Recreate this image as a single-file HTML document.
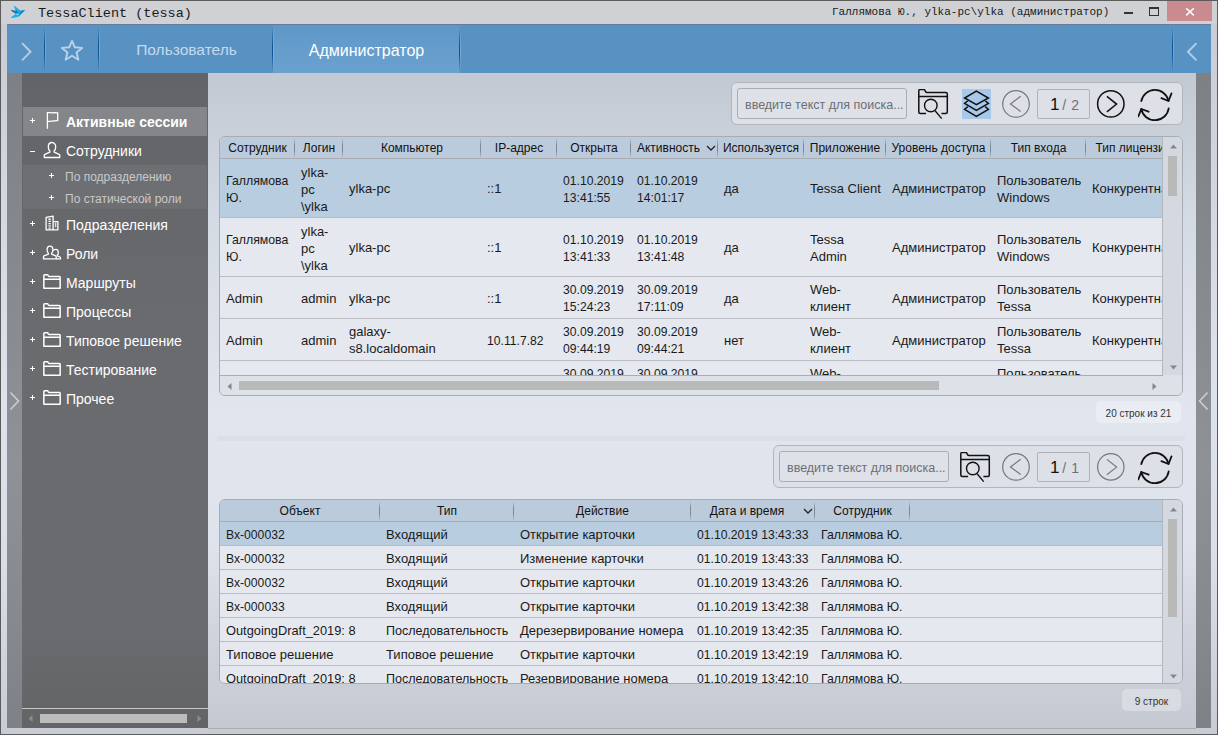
<!DOCTYPE html><html><head><meta charset="utf-8"><style>
*{margin:0;padding:0;box-sizing:border-box}
html,body{width:1218px;height:735px;overflow:hidden;background:#5b5b5b;font-family:"Liberation Sans",sans-serif}
.abs{position:absolute}
#win{position:absolute;left:1px;top:1px;width:1216px;height:733px;background:linear-gradient(#c7cbd3 0px,#d3d8e0 200px,#dde3ec 400px,#d9dee7 560px,#c8cdd5 733px)}
#title{position:absolute;left:1px;top:1px;width:1216px;height:23px;background:#cfd1d5}
.mono{font-family:"Liberation Mono",monospace}
#hdr{position:absolute;left:7px;top:24px;width:1204px;height:50px;background:#5892c3;border-top:1px solid #687b9a;border-bottom:1px solid #647b97}
.sep{position:absolute;top:2px;width:1px;height:45px;background:linear-gradient(rgba(13,80,150,0),#0b5599 40%,#0b5599 60%,rgba(13,80,150,0))}
.sep::after{content:'';position:absolute;left:1px;top:0;width:1px;height:45px;background:linear-gradient(rgba(140,190,230,0),rgba(140,190,230,0.6) 50%,rgba(140,190,230,0))}
.tab{position:absolute;top:0;height:49px;color:#fff;font-size:16px;line-height:49px;text-align:center}
#side{position:absolute;left:22px;top:73px;width:186px;height:655px;background:linear-gradient(#636467,#6a6b6e 40%,#6a6b6e 85%,#636466)}
#lstrip{position:absolute;left:7px;top:73px;width:15px;height:655px;background:linear-gradient(#7d8084,#8a8d91 45%,#8e9195 60%,#85888c 85%,#7e8185)}
#rstrip{position:absolute;left:1196px;top:73px;width:15px;height:655px;background:linear-gradient(#7d8084,#8a8d91 45%,#8e9195 60%,#85888c 85%,#7e8185)}
#main{position:absolute;left:208px;top:73px;width:988px;height:655px;background:linear-gradient(#c3c9d3 0px,#d5dbe4 150px,#e1e5ed 340px,#dfe4ec 470px,#d0d5dd 560px,#c4c9d2 655px)}
.srow{position:absolute;left:22px;width:185px;height:29px;color:#fff;font-size:14px}
.srow .pl{position:absolute;left:9px;top:0;line-height:29px;font-size:12px}
.srow .tx{position:absolute;left:44px;top:0;line-height:29px}
.ico{position:absolute}
.tb{position:absolute;background:#dde0e6;border:1px solid #b1b5bc;border-radius:6px}
.inp{position:absolute;background:#dee1e7;border:1px solid #a9adb4;border-radius:3px;color:#6c6f75;font-size:12.5px}
.pg{position:absolute;border:1px solid #aeb2b9;border-radius:2px;background:#dde0e6}
.grid{position:absolute;border:1px solid #a9adb3;border-radius:6px;overflow:hidden;background:#dde2e9}
.gh{position:absolute;left:0;top:0;height:22px;background:#bccbdb;border-bottom:1px solid #a7acb3}
.hc{position:absolute;top:0;height:22px;line-height:22px;font-size:12px;color:#111;text-align:center;white-space:nowrap}
.hs{position:absolute;top:1px;width:1px;height:20px;background:linear-gradient(#bccbdb,#7d8994 35%,#7d8994 65%,#bccbdb)}
.r{position:absolute;left:0;border-bottom:1px solid #b9bdc3;background:#e5e8ee}
.r.sel{background:#b9cde0}
.c{position:absolute;font-size:13px;color:#1a1a1a;line-height:17px;white-space:nowrap}
.badge{position:absolute;background:rgba(255,255,255,0.3);border-radius:5px;font-size:10px;color:#333;text-align:center}
</style></head><body>
<div id="win"></div>
<div id="title"></div>
<svg class="abs" style="left:8px;top:3px" width="22" height="18" viewBox="0 0 22 18">
<path d="M6.3 3.2 L12.5 8 L11.5 12.7 L8.8 9.5 Z" fill="#17ade6" stroke="#17ade6" stroke-width="0.8" stroke-linejoin="round"/>
<path d="M3.2 7.3 L9 8.5 L9.8 10.6 L7.5 10.3 Z" fill="#166db0" stroke="#166db0" stroke-width="0.8" stroke-linejoin="round"/>
<path d="M12.3 8.1 L14.7 7.1 L17.2 7 L16.3 7.9 L11.5 12.7 Z" fill="#1784c6"/>
<path d="M14.7 7.1 L17.2 6.8 L16.5 7.8 Z" fill="#2ab8ea"/>
<path d="M3.3 14.5 L9 10.5 L11.5 12.7 L8 14 Z" fill="#1aaee6" stroke="#1aaee6" stroke-width="0.8" stroke-linejoin="round"/>
<circle cx="9.3" cy="11.2" r="0.8" fill="#e8f6fc"/>
</svg>
<div class="abs mono" style="left:38px;top:4px;font-size:13.5px;line-height:19px;color:#1a1a1a">TessaClient (tessa)</div>
<div class="abs mono" style="left:832px;top:5px;font-size:11px;line-height:14px;color:#1a1a1a">Галлямова Ю., ylka-pc\ylka (администратор)</div>
<div class="abs" style="left:1124px;top:12px;width:9px;height:2px;background:#333"></div>
<div class="abs" style="left:1149px;top:7px;width:10px;height:9px;border:1px solid #333;border-top:2px solid #333"></div>
<div class="abs" style="left:1167px;top:1px;width:45px;height:20px;background:#c98b8e"></div>
<svg class="abs" style="left:1185px;top:7px" width="10" height="10" viewBox="0 0 10 10"><path d="M1.2 1.2 L8.8 8.4 M8.8 1.2 L1.2 8.4" stroke="#fff" stroke-width="1.5"/></svg>
<div id="hdr">
<div class="sep" style="left:37px"></div>
<div class="sep" style="left:91px"></div>
<div class="tab" style="left:266px;width:187px;background:linear-gradient(#5f98c8,#6aa1cf)"></div>
<div class="sep" style="left:265px"></div>
<div class="sep" style="left:452px"></div>
<div class="sep" style="left:1165px"></div>
<div class="tab" style="left:92px;width:175px;color:#c5d9ec;font-size:15.5px;line-height:50px">Пользователь</div>
<div class="tab" style="left:266px;width:187px;line-height:51px">Администратор</div>
<svg class="abs" style="left:14px;top:17px" width="12" height="20" viewBox="0 0 12 20"><path d="M1 1.2 L9.5 9.8 L1 18.4" fill="none" stroke="#b5cfe8" stroke-width="1.9"/></svg>
<svg class="abs" style="left:1179px;top:17px" width="12" height="20" viewBox="0 0 12 20"><path d="M10.5 1.2 L2 9.8 L10.5 18.4" fill="none" stroke="#b5cfe8" stroke-width="1.9"/></svg>
<svg class="abs" style="left:53px;top:14px" width="24" height="23" viewBox="0 0 24 23"><path d="M12 1.9 L14.8 8.3 L22.2 8.9 L16.5 13.6 L18.4 20.8 L12 16.8 L5.6 20.8 L7.5 13.6 L1.8 8.9 L9.2 8.3 Z" fill="none" stroke="#b9d1e8" stroke-width="1.9" stroke-linejoin="round"/></svg>
</div>
<div id="lstrip"></div><div id="rstrip"></div>
<div id="side"></div>
<div id="main"></div>
<svg class="abs" style="left:9px;top:391px" width="11" height="20" viewBox="0 0 11 20"><path d="M1.5 1.5 L9.5 10 L1.5 18.5" fill="none" stroke="#cfd1d4" stroke-width="1.5"/></svg>
<svg class="abs" style="left:1198px;top:391px" width="11" height="20" viewBox="0 0 11 20"><path d="M9.5 1.5 L1.5 10 L9.5 18.5" fill="none" stroke="#cfd1d4" stroke-width="1.5"/></svg>
<div class="abs" style="left:23px;top:107px;width:184px;height:29px;background:#858689"></div>
<div class="abs" style="left:23px;top:165px;width:184px;height:44px;background:#6e6f72"></div>
<div class="abs" style="left:29.8px;top:119.9px;width:5.4px;height:1.3px;background:#fff"></div><div class="abs" style="left:32px;top:117.9px;width:1.3px;height:5.4px;background:#fff"></div>
<div class="abs" style="left:66px;top:112px;line-height:20px;font-size:14px;color:#fff;font-weight:bold;white-space:nowrap">Активные сессии</div>
<svg class="abs" style="left:45px;top:111px" width="15" height="19" viewBox="0 0 15 19"><path d="M2.4 17.3 V1.6 C4.5 1.3 6 1.9 8 1.8 C10 1.7 11 1.5 12.7 1.9 V9.7 C10.5 9.5 9 10 7 10.1 C5 10.2 4 10.4 2.4 10.6" fill="none" stroke="#fff" stroke-width="1.3" stroke-linejoin="round" stroke-linecap="round"/></svg>
<div class="abs" style="left:29.8px;top:150.9px;width:5.4px;height:1.3px;background:#fff"></div>
<div class="abs" style="left:66px;top:141px;line-height:20px;font-size:14px;color:#fff;font-weight:normal;white-space:nowrap">Сотрудники</div>
<svg class="abs" style="left:43px;top:141px" width="18" height="18" viewBox="0 0 18 18"><path d="M9 1.5 C6.6 1.5 5.3 3.5 5.3 5.9 C5.3 8.1 6.3 9.4 6.9 9.9 V11.1 L1.8 13.3 Q1.3 13.5 1.3 14.1 V16.5 H16.7 V14.1 Q16.7 13.5 16.2 13.3 L11.1 11.1 V9.9 C11.7 9.4 12.7 8.1 12.7 5.9 C12.7 3.5 11.4 1.5 9 1.5 Z" fill="none" stroke="#fff" stroke-width="1.3" stroke-linejoin="round"/></svg>
<div class="abs" style="left:29.8px;top:222.9px;width:5.4px;height:1.3px;background:#fff"></div><div class="abs" style="left:32px;top:220.9px;width:1.3px;height:5.4px;background:#fff"></div>
<div class="abs" style="left:66px;top:215px;line-height:20px;font-size:14px;color:#fff;font-weight:normal;white-space:nowrap">Подразделения</div>
<svg class="abs" style="left:44px;top:215px" width="16" height="17" viewBox="0 0 16 17"><path d="M2.1 14.8 V2.3 L9.1 1.1 V14.8 Z M9.1 6.6 H13.9 V14.8 H9.1" fill="none" stroke="#fff" stroke-width="1.3" stroke-linejoin="round"/><path d="M5.6 3.6 V14" stroke="#fff" stroke-width="2.2" stroke-dasharray="1.3 0.9"/><rect x="10.9" y="7.7" width="1.4" height="4.5" fill="#ddd"/></svg>
<div class="abs" style="left:29.8px;top:251.9px;width:5.4px;height:1.3px;background:#fff"></div><div class="abs" style="left:32px;top:249.9px;width:1.3px;height:5.4px;background:#fff"></div>
<div class="abs" style="left:66px;top:244px;line-height:20px;font-size:14px;color:#fff;font-weight:normal;white-space:nowrap">Роли</div>
<svg class="abs" style="left:42px;top:244px" width="20" height="17" viewBox="0 0 20 17"><path d="M8 2.2 C6 2.2 5.1 3.9 5.1 5.9 C5.1 7.7 5.9 8.8 6.4 9.2 V10.2 L2 11.9 Q1.5 12.1 1.5 12.7 V14.9 H14.2 V12.7 Q14.2 12.1 13.7 11.9 L9.6 10.2 V9.2 C10.1 8.8 10.9 7.7 10.9 5.9 C10.9 3.9 10 2.2 8 2.2 Z" fill="none" stroke="#fff" stroke-width="1.3" stroke-linejoin="round"/><path d="M11.3 6.6 C11.7 5.8 12.5 5.3 13.8 5.3 C15.5 5.3 16.3 6.8 16.3 8.4 C16.3 9.9 15.7 10.8 15.3 11.1 V11.8 L18 13 Q18.5 13.2 18.5 13.7 V14.9 H14.2" fill="none" stroke="#fff" stroke-width="1.3" stroke-linejoin="round"/></svg>
<div class="abs" style="left:29.8px;top:280.9px;width:5.4px;height:1.3px;background:#fff"></div><div class="abs" style="left:32px;top:278.9px;width:1.3px;height:5.4px;background:#fff"></div>
<div class="abs" style="left:66px;top:273px;line-height:20px;font-size:14px;color:#fff;font-weight:normal;white-space:nowrap">Маршруты</div>
<svg class="abs" style="left:42px;top:272px" width="20" height="19" viewBox="0 0 20 19"><path d="M1.85 16.35 V3.6 Q1.85 2.85 2.6 2.85 H5.3 Q5.9 2.85 6.2 3.5 L6.5 4.1 Q6.7 4.45 7.2 4.45 H17.4 Q18.15 4.45 18.15 5.2 V16.35 Z M1.85 7.15 H18.15" fill="none" stroke="#fff" stroke-width="1.5" stroke-linejoin="round"/></svg>
<div class="abs" style="left:29.8px;top:309.9px;width:5.4px;height:1.3px;background:#fff"></div><div class="abs" style="left:32px;top:307.9px;width:1.3px;height:5.4px;background:#fff"></div>
<div class="abs" style="left:66px;top:302px;line-height:20px;font-size:14px;color:#fff;font-weight:normal;white-space:nowrap">Процессы</div>
<svg class="abs" style="left:42px;top:301px" width="20" height="19" viewBox="0 0 20 19"><path d="M1.85 16.35 V3.6 Q1.85 2.85 2.6 2.85 H5.3 Q5.9 2.85 6.2 3.5 L6.5 4.1 Q6.7 4.45 7.2 4.45 H17.4 Q18.15 4.45 18.15 5.2 V16.35 Z M1.85 7.15 H18.15" fill="none" stroke="#fff" stroke-width="1.5" stroke-linejoin="round"/></svg>
<div class="abs" style="left:29.8px;top:338.9px;width:5.4px;height:1.3px;background:#fff"></div><div class="abs" style="left:32px;top:336.9px;width:1.3px;height:5.4px;background:#fff"></div>
<div class="abs" style="left:66px;top:331px;line-height:20px;font-size:14px;color:#fff;font-weight:normal;white-space:nowrap">Типовое решение</div>
<svg class="abs" style="left:42px;top:330px" width="20" height="19" viewBox="0 0 20 19"><path d="M1.85 16.35 V3.6 Q1.85 2.85 2.6 2.85 H5.3 Q5.9 2.85 6.2 3.5 L6.5 4.1 Q6.7 4.45 7.2 4.45 H17.4 Q18.15 4.45 18.15 5.2 V16.35 Z M1.85 7.15 H18.15" fill="none" stroke="#fff" stroke-width="1.5" stroke-linejoin="round"/></svg>
<div class="abs" style="left:29.8px;top:367.9px;width:5.4px;height:1.3px;background:#fff"></div><div class="abs" style="left:32px;top:365.9px;width:1.3px;height:5.4px;background:#fff"></div>
<div class="abs" style="left:66px;top:360px;line-height:20px;font-size:14px;color:#fff;font-weight:normal;white-space:nowrap">Тестирование</div>
<svg class="abs" style="left:42px;top:359px" width="20" height="19" viewBox="0 0 20 19"><path d="M1.85 16.35 V3.6 Q1.85 2.85 2.6 2.85 H5.3 Q5.9 2.85 6.2 3.5 L6.5 4.1 Q6.7 4.45 7.2 4.45 H17.4 Q18.15 4.45 18.15 5.2 V16.35 Z M1.85 7.15 H18.15" fill="none" stroke="#fff" stroke-width="1.5" stroke-linejoin="round"/></svg>
<div class="abs" style="left:29.8px;top:396.9px;width:5.4px;height:1.3px;background:#fff"></div><div class="abs" style="left:32px;top:394.9px;width:1.3px;height:5.4px;background:#fff"></div>
<div class="abs" style="left:66px;top:389px;line-height:20px;font-size:14px;color:#fff;font-weight:normal;white-space:nowrap">Прочее</div>
<svg class="abs" style="left:42px;top:388px" width="20" height="19" viewBox="0 0 20 19"><path d="M1.85 16.35 V3.6 Q1.85 2.85 2.6 2.85 H5.3 Q5.9 2.85 6.2 3.5 L6.5 4.1 Q6.7 4.45 7.2 4.45 H17.4 Q18.15 4.45 18.15 5.2 V16.35 Z M1.85 7.15 H18.15" fill="none" stroke="#fff" stroke-width="1.5" stroke-linejoin="round"/></svg>
<div class="abs" style="left:48.8px;top:174.9px;width:5.4px;height:1.3px;background:#fff"></div><div class="abs" style="left:51px;top:172.9px;width:1.3px;height:5.4px;background:#fff"></div>
<div class="abs" style="left:65px;top:168px;line-height:18px;font-size:12px;color:#c9c9cb;white-space:nowrap">По подразделению</div>
<div class="abs" style="left:48.8px;top:196.9px;width:5.4px;height:1.3px;background:#fff"></div><div class="abs" style="left:51px;top:194.9px;width:1.3px;height:5.4px;background:#fff"></div>
<div class="abs" style="left:65px;top:190px;line-height:18px;font-size:12px;color:#c9c9cb;white-space:nowrap">По статической роли</div>
<div class="abs" style="left:22px;top:708px;width:186px;height:1px;background:#c6c6c8"></div>
<div class="abs" style="left:208px;top:728px;width:988px;height:1px;background:#abaeb2"></div>
<div class="abs" style="left:40px;top:714px;width:147px;height:9px;background:#bcbcbc"></div>
<svg class="abs" style="left:28px;top:715px" width="5" height="7" viewBox="0 0 5 7"><path d="M4.5 0 V7 L0.5 3.5 Z" fill="#8a8b8e"/></svg>
<svg class="abs" style="left:197px;top:715px" width="5" height="7" viewBox="0 0 5 7"><path d="M0.5 0 V7 L4.5 3.5 Z" fill="#8a8b8e"/></svg>
<div class="grid" style="left:219px;top:136px;width:964px;height:260px">
<div class="gh" style="width:943px"></div>
<div class="hc" style="left:0px;width:75px">Сотрудник</div>
<div class="hs" style="left:74px"></div>
<div class="hc" style="left:75px;width:48px">Логин</div>
<div class="hs" style="left:122px"></div>
<div class="hc" style="left:123px;width:138px">Компьютер</div>
<div class="hs" style="left:260px"></div>
<div class="hc" style="left:261px;width:76px">IP-адрес</div>
<div class="hs" style="left:336px"></div>
<div class="hc" style="left:337px;width:74px">Открыта</div>
<div class="hs" style="left:410px"></div>
<div class="hc" style="left:411px;width:75px">Активность</div>
<div class="hs" style="left:497px"></div>
<svg class="abs" style="left:486px;top:8px" width="10" height="7" viewBox="0 0 10 7"><path d="M1 1 L5 5 L9 1" fill="none" stroke="#222" stroke-width="1.3"/></svg>
<div class="hc" style="left:498px;width:86px">Используется</div>
<div class="hs" style="left:583px"></div>
<div class="hc" style="left:584px;width:82px">Приложение</div>
<div class="hs" style="left:665px"></div>
<div class="hc" style="left:666px;width:105px">Уровень доступа</div>
<div class="hs" style="left:770px"></div>
<div class="hc" style="left:771px;width:95px">Тип входа</div>
<div class="hs" style="left:865px"></div>
<div class="hc" style="left:866px;width:95px">Тип лицензии</div>
<div class="abs" style="left:0;top:0;width:943px;height:239px;overflow:hidden">
<div class="r sel" style="top:22px;width:943px;height:59px"></div>
<div class="c" style="left:6px;top:35px;transform:scaleX(0.945);transform-origin:0 0">Галлямова<br>Ю.</div>
<div class="c" style="left:81px;top:27px">ylka-<br>pc<br>\ylka</div>
<div class="c" style="left:129px;top:43px">ylka-pc</div>
<div class="c" style="left:267px;top:43px">::1</div>
<div class="c" style="left:343px;top:35px;transform:scaleX(0.935);transform-origin:0 0">01.10.2019<br>13:41:55</div>
<div class="c" style="left:417px;top:35px;transform:scaleX(0.935);transform-origin:0 0">01.10.2019<br>14:01:17</div>
<div class="c" style="left:504px;top:43px">да</div>
<div class="c" style="left:590px;top:43px">Tessa Client</div>
<div class="c" style="left:672px;top:43px">Администратор</div>
<div class="c" style="left:777px;top:35px">Пользователь<br>Windows</div>
<div class="c" style="left:872px;top:43px">Конкурентная</div>
<div class="r" style="top:81px;width:943px;height:59px"></div>
<div class="c" style="left:6px;top:94px;transform:scaleX(0.945);transform-origin:0 0">Галлямова<br>Ю.</div>
<div class="c" style="left:81px;top:86px">ylka-<br>pc<br>\ylka</div>
<div class="c" style="left:129px;top:102px">ylka-pc</div>
<div class="c" style="left:267px;top:102px">::1</div>
<div class="c" style="left:343px;top:94px;transform:scaleX(0.935);transform-origin:0 0">01.10.2019<br>13:41:33</div>
<div class="c" style="left:417px;top:94px;transform:scaleX(0.935);transform-origin:0 0">01.10.2019<br>13:41:48</div>
<div class="c" style="left:504px;top:102px">да</div>
<div class="c" style="left:590px;top:94px">Tessa<br>Admin</div>
<div class="c" style="left:672px;top:102px">Администратор</div>
<div class="c" style="left:777px;top:94px">Пользователь<br>Windows</div>
<div class="c" style="left:872px;top:102px">Конкурентная</div>
<div class="r" style="top:140px;width:943px;height:42px"></div>
<div class="c" style="left:6px;top:153px">Admin</div>
<div class="c" style="left:81px;top:153px">admin</div>
<div class="c" style="left:129px;top:153px">ylka-pc</div>
<div class="c" style="left:267px;top:153px">::1</div>
<div class="c" style="left:343px;top:144px;transform:scaleX(0.935);transform-origin:0 0">30.09.2019<br>15:24:23</div>
<div class="c" style="left:417px;top:144px;transform:scaleX(0.935);transform-origin:0 0">30.09.2019<br>17:11:09</div>
<div class="c" style="left:504px;top:153px">да</div>
<div class="c" style="left:590px;top:144px">Web-<br>клиент</div>
<div class="c" style="left:672px;top:153px">Администратор</div>
<div class="c" style="left:777px;top:144px">Пользователь<br>Tessa</div>
<div class="c" style="left:872px;top:153px">Конкурентная</div>
<div class="r" style="top:182px;width:943px;height:42px"></div>
<div class="c" style="left:6px;top:195px">Admin</div>
<div class="c" style="left:81px;top:195px">admin</div>
<div class="c" style="left:129px;top:186px">galaxy-<br>s8.localdomain</div>
<div class="c" style="left:267px;top:195px;transform:scaleX(0.935);transform-origin:0 0">10.11.7.82</div>
<div class="c" style="left:343px;top:186px;transform:scaleX(0.935);transform-origin:0 0">30.09.2019<br>09:44:19</div>
<div class="c" style="left:417px;top:186px;transform:scaleX(0.935);transform-origin:0 0">30.09.2019<br>09:44:21</div>
<div class="c" style="left:504px;top:195px">нет</div>
<div class="c" style="left:590px;top:186px">Web-<br>клиент</div>
<div class="c" style="left:672px;top:195px">Администратор</div>
<div class="c" style="left:777px;top:186px">Пользователь<br>Tessa</div>
<div class="c" style="left:872px;top:195px">Конкурентная</div>
<div class="r" style="top:224px;width:943px;height:42px"></div>
<div class="c" style="left:6px;top:237px"></div>
<div class="c" style="left:81px;top:237px"></div>
<div class="c" style="left:129px;top:237px"></div>
<div class="c" style="left:267px;top:237px"></div>
<div class="c" style="left:343px;top:228px;transform:scaleX(0.935);transform-origin:0 0">30.09.2019<br>09:44:19</div>
<div class="c" style="left:417px;top:228px;transform:scaleX(0.935);transform-origin:0 0">30.09.2019<br>09:44:21</div>
<div class="c" style="left:504px;top:237px"></div>
<div class="c" style="left:590px;top:228px">Web-<br>клиент</div>
<div class="c" style="left:672px;top:237px"></div>
<div class="c" style="left:777px;top:228px">Пользователь<br>Tessa</div>
<div class="c" style="left:872px;top:237px"></div>
</div>
<div class="abs" style="left:0;top:238px;width:964px;height:22px;background:#dde1e8"></div>
<div class="abs" style="left:0;top:238px;width:943px;height:1px;background:#a9adb3"></div>
<div class="abs" style="left:19px;top:244px;width:700px;height:9px;background:#b9b9b9"></div>
<svg class="abs" style="left:7px;top:246px" width="5" height="7" viewBox="0 0 5 7"><path d="M4.5 0 V7 L0.5 3.5 Z" fill="#85878b"/></svg>
<svg class="abs" style="left:932px;top:246px" width="5" height="7" viewBox="0 0 5 7"><path d="M0.5 0 V7 L4.5 3.5 Z" fill="#85878b"/></svg>
<div class="abs" style="left:942px;top:0;width:22px;height:238px;background:#d4d9e1;border-left:1px solid #b3b7bd"></div>
<svg class="abs" style="left:950px;top:7px" width="7" height="5" viewBox="0 0 7 5"><path d="M0 4.5 L3.5 0.5 L7 4.5 Z" fill="#85878b"/></svg>
<div class="abs" style="left:948px;top:19px;width:9px;height:40px;background:#b9b9b9"></div>
<svg class="abs" style="left:950px;top:228px" width="7" height="5" viewBox="0 0 7 5"><path d="M0 0.5 L3.5 4.5 L7 0.5 Z" fill="#85878b"/></svg>
</div>
<div class="grid" style="left:219px;top:499px;width:964px;height:185px">
<div class="gh" style="width:943px"></div>
<div class="hc" style="left:0px;width:160px">Объект</div>
<div class="hs" style="left:159px"></div>
<div class="hc" style="left:160px;width:134px">Тип</div>
<div class="hs" style="left:293px"></div>
<div class="hc" style="left:294px;width:177px">Действие</div>
<div class="hs" style="left:470px"></div>
<div class="hc" style="left:471px;width:112px">Дата и время</div>
<div class="hs" style="left:594px"></div>
<svg class="abs" style="left:583px;top:8px" width="10" height="7" viewBox="0 0 10 7"><path d="M1 1 L5 5 L9 1" fill="none" stroke="#222" stroke-width="1.3"/></svg>
<div class="hc" style="left:595px;width:95px">Сотрудник</div>
<div class="hs" style="left:689px"></div>
<div class="abs" style="left:0;top:0;width:943px;height:185px;overflow:hidden">
<div class="r sel" style="top:22px;width:943px;height:24px"></div>
<div class="c" style="left:6px;top:26px;transform:scaleX(0.935);transform-origin:0 0">Вх-000032</div>
<div class="c" style="left:166px;top:26px">Входящий</div>
<div class="c" style="left:300px;top:26px">Открытие карточки</div>
<div class="c" style="left:477px;top:26px;transform:scaleX(0.935);transform-origin:0 0">01.10.2019 13:43:33</div>
<div class="c" style="left:601px;top:26px;transform:scaleX(0.945);transform-origin:0 0">Галлямова Ю.</div>
<div class="r" style="top:46px;width:943px;height:24px"></div>
<div class="c" style="left:6px;top:50px;transform:scaleX(0.935);transform-origin:0 0">Вх-000032</div>
<div class="c" style="left:166px;top:50px">Входящий</div>
<div class="c" style="left:300px;top:50px">Изменение карточки</div>
<div class="c" style="left:477px;top:50px;transform:scaleX(0.935);transform-origin:0 0">01.10.2019 13:43:33</div>
<div class="c" style="left:601px;top:50px;transform:scaleX(0.945);transform-origin:0 0">Галлямова Ю.</div>
<div class="r" style="top:70px;width:943px;height:24px"></div>
<div class="c" style="left:6px;top:74px;transform:scaleX(0.935);transform-origin:0 0">Вх-000032</div>
<div class="c" style="left:166px;top:74px">Входящий</div>
<div class="c" style="left:300px;top:74px">Открытие карточки</div>
<div class="c" style="left:477px;top:74px;transform:scaleX(0.935);transform-origin:0 0">01.10.2019 13:43:26</div>
<div class="c" style="left:601px;top:74px;transform:scaleX(0.945);transform-origin:0 0">Галлямова Ю.</div>
<div class="r" style="top:94px;width:943px;height:24px"></div>
<div class="c" style="left:6px;top:98px;transform:scaleX(0.935);transform-origin:0 0">Вх-000033</div>
<div class="c" style="left:166px;top:98px">Входящий</div>
<div class="c" style="left:300px;top:98px">Открытие карточки</div>
<div class="c" style="left:477px;top:98px;transform:scaleX(0.935);transform-origin:0 0">01.10.2019 13:42:38</div>
<div class="c" style="left:601px;top:98px;transform:scaleX(0.945);transform-origin:0 0">Галлямова Ю.</div>
<div class="r" style="top:118px;width:943px;height:24px"></div>
<div class="c" style="left:6px;top:122px;transform:scaleX(0.985);transform-origin:0 0">OutgoingDraft_2019: 8</div>
<div class="c" style="left:166px;top:122px;transform:scaleX(0.965);transform-origin:0 0">Последовательность</div>
<div class="c" style="left:300px;top:122px">Дерезервирование номера</div>
<div class="c" style="left:477px;top:122px;transform:scaleX(0.935);transform-origin:0 0">01.10.2019 13:42:35</div>
<div class="c" style="left:601px;top:122px;transform:scaleX(0.945);transform-origin:0 0">Галлямова Ю.</div>
<div class="r" style="top:142px;width:943px;height:24px"></div>
<div class="c" style="left:6px;top:146px">Типовое решение</div>
<div class="c" style="left:166px;top:146px">Типовое решение</div>
<div class="c" style="left:300px;top:146px">Открытие карточки</div>
<div class="c" style="left:477px;top:146px;transform:scaleX(0.935);transform-origin:0 0">01.10.2019 13:42:19</div>
<div class="c" style="left:601px;top:146px;transform:scaleX(0.945);transform-origin:0 0">Галлямова Ю.</div>
<div class="r" style="top:166px;width:943px;height:24px"></div>
<div class="c" style="left:6px;top:170px;transform:scaleX(0.985);transform-origin:0 0">OutgoingDraft_2019: 8</div>
<div class="c" style="left:166px;top:170px;transform:scaleX(0.965);transform-origin:0 0">Последовательность</div>
<div class="c" style="left:300px;top:170px">Резервирование номера</div>
<div class="c" style="left:477px;top:170px;transform:scaleX(0.935);transform-origin:0 0">01.10.2019 13:42:10</div>
<div class="c" style="left:601px;top:170px;transform:scaleX(0.945);transform-origin:0 0">Галлямова Ю.</div>
</div>
<div class="abs" style="left:942px;top:0;width:22px;height:185px;background:#d4d9e1;border-left:1px solid #b3b7bd"></div>
<svg class="abs" style="left:950px;top:7px" width="7" height="5" viewBox="0 0 7 5"><path d="M0 4.5 L3.5 0.5 L7 4.5 Z" fill="#85878b"/></svg>
<div class="abs" style="left:948px;top:19px;width:9px;height:98px;background:#b9b9b9"></div>
<svg class="abs" style="left:950px;top:174px" width="7" height="5" viewBox="0 0 7 5"><path d="M0 0.5 L3.5 4.5 L7 0.5 Z" fill="#85878b"/></svg>
</div>
<div class="tb" style="left:731px;top:82px;width:452px;height:43px"></div>
<div class="inp" style="left:737px;top:88px;width:170px;height:31px;line-height:33px;padding-left:7px">введите текст для поиска...</div>
<svg class="abs" style="left:918px;top:89px" width="32" height="32" viewBox="0 0 32 32"><path d="M8.1 24.4 H2.3 Q0.8 24.4 0.8 22.9 V1.9 Q0.8 0.4 2.3 0.4 H5.6 Q6.5 0.4 6.9 1.3 L7.4 2.4 Q7.9 3.6 9 3.6 H27.8 Q29.3 3.6 29.3 5.1 V22.9 Q29.3 24.4 27.8 24.4 H23.4 M0.8 7.5 H29.3" fill="none" stroke="#111" stroke-width="1.5" stroke-linejoin="round"/><circle cx="12.8" cy="16.5" r="6.3" fill="none" stroke="#111" stroke-width="1.4"/><path d="M17.1 21.7 L23.7 29.6" stroke="#111" stroke-width="1.4"/></svg>
<div class="abs" style="left:962px;top:89px;width:29px;height:30px;background:#a8c8ea"></div>
<svg class="abs" style="left:962px;top:89px" width="29" height="30" viewBox="0 0 29 30"><g fill="none" stroke="#111" stroke-width="1.5" stroke-linejoin="miter"><path d="M14.4 2.1 L26.4 9 L14.4 15.6 L2.6 9 Z"/><path d="M5.8 11.7 L2.6 14.4 L14.4 21.3 L26.4 14.4 L23.2 11.7"/><path d="M5.8 17.6 L2.6 20.3 L14.4 27.4 L26.4 20.3 L23.2 17.6"/></g></svg>
<svg class="abs" style="left:1001px;top:88px" width="32" height="32" viewBox="0 0 32 32"><circle cx="15" cy="15.9" r="13.3" fill="none" stroke="#76787c" stroke-width="1.2"/><path d="M19.6 8.3 L9.5 15.9 L19.6 23.5" fill="none" stroke="#76787c" stroke-width="1.2"/></svg>
<div class="pg" style="left:1037px;top:89px;width:53px;height:30px"></div>
<div class="abs" style="left:1038px;top:90px;width:53px;text-align:center;white-space:nowrap;color:#111"><span style="font-size:17px;line-height:30px">1</span><span style="font-size:14px;color:#6d7075;line-height:30px">&thinsp;/&nbsp;<span style="margin-left:1px">2</span></span></div>
<svg class="abs" style="left:1096px;top:88px" width="32" height="32" viewBox="0 0 32 32"><circle cx="14.8" cy="15.9" r="13.2" fill="none" stroke="#111" stroke-width="1.5"/><path d="M10.9 8.4 L20.6 16.1 L10.9 23.8" fill="none" stroke="#111" stroke-width="1.5"/></svg>
<svg class="abs" style="left:1138px;top:89px" width="36" height="32" viewBox="0 0 36 32"><g fill="none" stroke="#111" stroke-width="1.8" stroke-linecap="round" stroke-linejoin="round"><path d="M3.3 12.1 A13.9 13.9 0 0 1 30.5 11.8"/><path d="M23.4 9.1 L30.5 12 L33.5 4.4"/><path d="M30.7 19.4 A13.9 13.9 0 0 1 3.3 20"/><path d="M10.6 22.7 L3.3 20 L0.3 27.3"/></g></svg>
<div class="tb" style="left:773px;top:445px;width:410px;height:43px"></div>
<div class="inp" style="left:779px;top:451px;width:170px;height:31px;line-height:33px;padding-left:7px">введите текст для поиска...</div>
<svg class="abs" style="left:960px;top:452px" width="32" height="32" viewBox="0 0 32 32"><path d="M8.1 24.4 H2.3 Q0.8 24.4 0.8 22.9 V1.9 Q0.8 0.4 2.3 0.4 H5.6 Q6.5 0.4 6.9 1.3 L7.4 2.4 Q7.9 3.6 9 3.6 H27.8 Q29.3 3.6 29.3 5.1 V22.9 Q29.3 24.4 27.8 24.4 H23.4 M0.8 7.5 H29.3" fill="none" stroke="#111" stroke-width="1.5" stroke-linejoin="round"/><circle cx="12.8" cy="16.5" r="6.3" fill="none" stroke="#111" stroke-width="1.4"/><path d="M17.1 21.7 L23.7 29.6" stroke="#111" stroke-width="1.4"/></svg>
<svg class="abs" style="left:1001px;top:451px" width="32" height="32" viewBox="0 0 32 32"><circle cx="15" cy="15.9" r="13.3" fill="none" stroke="#76787c" stroke-width="1.2"/><path d="M19.6 8.3 L9.5 15.9 L19.6 23.5" fill="none" stroke="#76787c" stroke-width="1.2"/></svg>
<div class="pg" style="left:1037px;top:452px;width:53px;height:30px"></div>
<div class="abs" style="left:1038px;top:453px;width:53px;text-align:center;white-space:nowrap;color:#111"><span style="font-size:17px;line-height:30px">1</span><span style="font-size:14px;color:#6d7075;line-height:30px">&thinsp;/&nbsp;<span style="margin-left:1px">1</span></span></div>
<svg class="abs" style="left:1096px;top:451px" width="32" height="32" viewBox="0 0 32 32"><circle cx="14.8" cy="15.9" r="13.2" fill="none" stroke="#76787c" stroke-width="1.2"/><path d="M10.9 8.4 L20.6 16.1 L10.9 23.8" fill="none" stroke="#76787c" stroke-width="1.2"/></svg>
<svg class="abs" style="left:1138px;top:452px" width="36" height="32" viewBox="0 0 36 32"><g fill="none" stroke="#111" stroke-width="1.8" stroke-linecap="round" stroke-linejoin="round"><path d="M3.3 12.1 A13.9 13.9 0 0 1 30.5 11.8"/><path d="M23.4 9.1 L30.5 12 L33.5 4.4"/><path d="M30.7 19.4 A13.9 13.9 0 0 1 3.3 20"/><path d="M10.6 22.7 L3.3 20 L0.3 27.3"/></g></svg>
<div class="abs" style="left:217px;top:436px;width:968px;height:5px;background:#dbdfe7"></div>
<div class="badge" style="left:1096px;top:401px;width:85px;height:22px;line-height:25px">20 строк из 21</div>
<div class="badge" style="left:1122px;top:689px;width:59px;height:22px;line-height:25px">9 строк</div>
</body></html>
